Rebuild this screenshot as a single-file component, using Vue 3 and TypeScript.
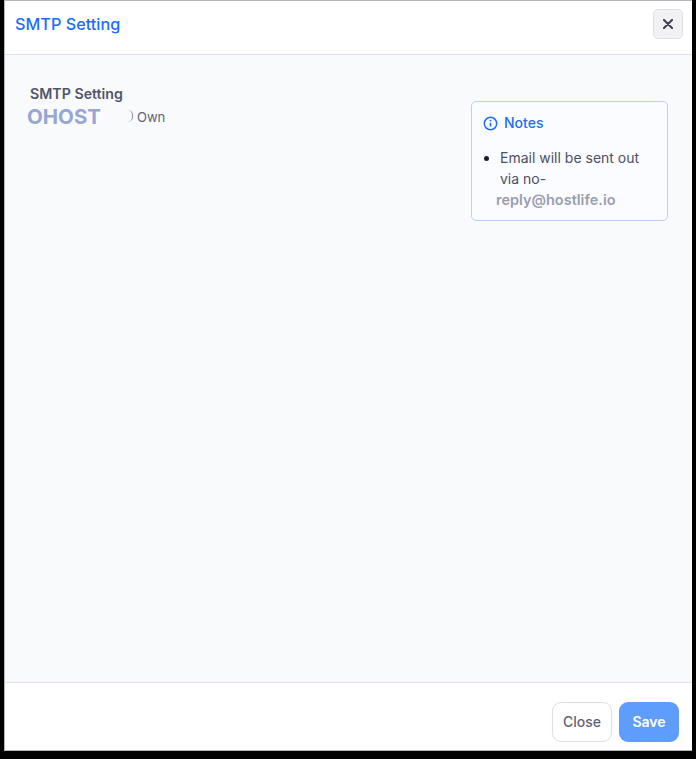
<script setup lang="ts">
const notes: string = 'Email will be sent out via no-'
</script>

<template>
  <div class="backdrop">
    <div class="modal">
      <header class="head">
        <h1 class="title">SMTP Setting</h1>
        <button class="x" type="button" aria-label="Close">
          <svg width="10" height="10" viewBox="0 0 10 10"><path d="M1 1l8 8M9 1l-8 8" stroke="#3f4254" stroke-width="2.1" stroke-linecap="round" /></svg>
        </button>
      </header>
      <main class="body">
        <section class="left">
          <div class="label">SMTP Setting</div>
          <div class="option">
            <span class="brand">OHOST</span>
            <span class="paren" aria-hidden="true"></span>
            <span class="own">Own</span>
          </div>
        </section>
        <aside class="note">
          <div class="note-head">
            <svg width="15" height="15" viewBox="0 0 16 16" fill="none"><circle cx="8" cy="8" r="6.6" stroke="#1b6cff" stroke-width="1.6" /><path d="M8 7.2v4" stroke="#1b6cff" stroke-width="1.7" /><circle cx="8" cy="4.9" r="1" fill="#1b6cff" /></svg>
            <span>Notes</span>
          </div>
          <ul class="list">
            <li>{{ notes }}</li>
          </ul>
          <div class="mail">reply@hostlife.io</div>
        </aside>
      </main>
      <footer class="foot">
        <button class="btn close" type="button">Close</button>
        <button class="btn save" type="button">Save</button>
      </footer>
    </div>
  </div>
</template>

<style>
html, body { margin: 0; background: #000; }
</style>

<style scoped>
.backdrop {
  width: 696px;
  height: 759px;
  padding: 0 4px 8px 4px;
  box-sizing: border-box;
  background: #000;
  font-family: Inter, "Liberation Sans", sans-serif;
}
.modal {
  height: 751px;
  box-sizing: border-box;
  display: flex;
  flex-direction: column;
  background: #fff;
  border: 1px solid #b5b5b5;
  border-right: 0;
}
.head {
  height: 54px;
  box-sizing: border-box;
  flex: none;
  display: flex;
  align-items: flex-start;
  justify-content: space-between;
  padding: 8px 9px 0 10px;
  border-bottom: 1px solid #e1e3ea;
}
.title {
  margin: 5px 0 0;
  font-size: 16.25px;
  line-height: 20px;
  font-weight: 500;
  color: #1b6cff;
}
.x {
  width: 30px;
  height: 30px;
  padding: 0;
  display: flex;
  align-items: center;
  justify-content: center;
  background: #f1f1f4;
  border: 1px solid #dbdfe9;
  border-radius: 5px;
}
.body {
  flex: 1;
  display: flex;
  justify-content: space-between;
  align-items: flex-start;
  background: #f9fafc;
  padding: 30px 24px 0 22px;
}
.left { display: flex; flex-direction: column; }
.label {
  margin-left: 3px;
  font-size: 14.2px;
  line-height: 17px;
  font-weight: 600;
  color: #50556b;
}
.option {
  display: flex;
  align-items: center;
  height: 30px;
}
.brand {
  font-size: 20.5px;
  line-height: 26px;
  font-weight: 700;
  color: #97a6d4;
}
.paren {
  width: 5px;
  height: 12px;
  margin-left: 27px;
  margin-top: -2px;
  box-sizing: border-box;
  border-right: 1px solid #8a8e9e;
  border-radius: 0 6px 6px 0;
}
.own {
  margin-left: 4px;
  font-size: 13px;
  color: #5e6278;
}
.note {
  width: 197px;
  height: 120px;
  box-sizing: border-box;
  margin-top: 16px;
  padding: 11px 12px;
  background: #fbfcff;
  border: 1px solid #b9d0fd;
  border-radius: 5px;
}
.note-head {
  display: flex;
  align-items: center;
  gap: 6px;
  margin-left: -1px;
  font-size: 14px;
  font-weight: 500;
  color: #1b6cff;
  line-height: 20px;
}
.list {
  margin: 14px 0 0;
  padding: 0 0 0 16px;
  font-size: 14px;
  line-height: 21px;
  color: #4b5066;
}
.list li::marker { color: #181c32; }
.mail {
  margin-left: 12px;
  font-size: 14.5px;
  line-height: 21px;
  font-weight: 600;
  color: #9a9eae;
}
.foot {
  flex: none;
  height: 68px;
  box-sizing: border-box;
  border-top: 1px solid #e1e3ea;
  display: flex;
  justify-content: flex-end;
  align-items: flex-start;
  gap: 7px;
  padding: 19px 13px 0 0;
}
.btn {
  width: 60px;
  height: 40px;
  box-sizing: border-box;
  padding: 0 0 2px;
  border-radius: 9px;
  font-family: inherit;
  font-size: 14px;
  font-weight: 500;
}
.close {
  background: #fff;
  border: 1px solid #dbdfe9;
  color: #5e6278;
}
.save {
  background: #5f9dfd;
  border: 0;
  color: #fff;
  font-weight: 600;
}
</style>
